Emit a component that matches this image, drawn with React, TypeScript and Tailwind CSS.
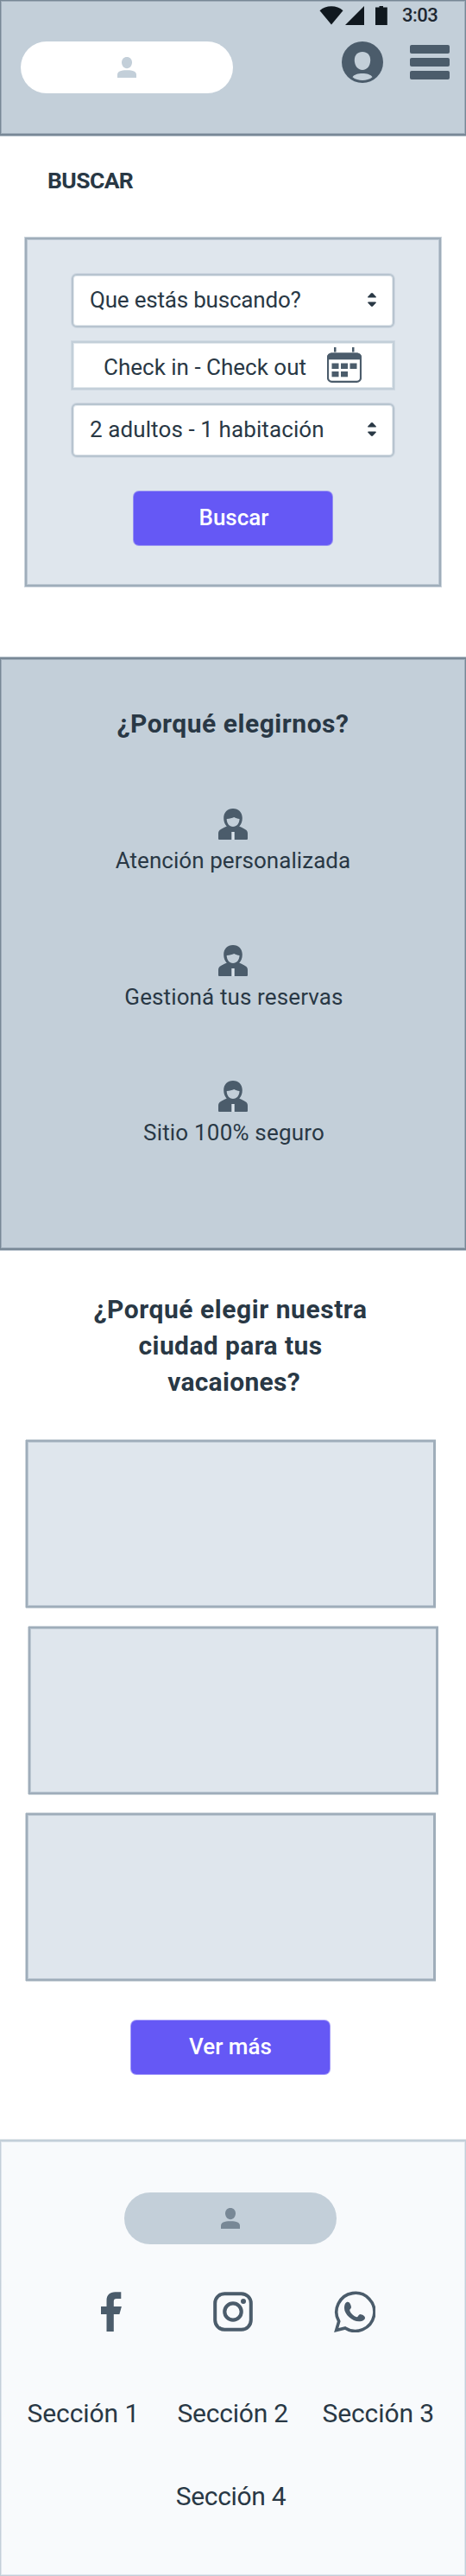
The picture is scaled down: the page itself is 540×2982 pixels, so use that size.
import type { ReactNode } from "react";

function PersonGlyph({ className }: { className: string }) {
  return (
    <svg viewBox="0 0 22 24" className={`h-6 w-[22px] ${className}`} fill="currentColor">
      <path d="M11 0c3.600 0 6 2.700 6 6.300S14.600 13.200 11 13.200 5 9.900 5 6.300 7.400 0 11 0z" />
      <path d="M0 24v-3.200C0 16.800 3.600 15.300 11 15.300s11 1.500 11 5.500V24z" />
    </svg>
  );
}

function StatusIcons() {
  return (
    <svg viewBox="0 0 80 22" className="mt-1.5 h-[22px] w-20" fill="#10181f">
      <path d="M.5 5.300C7.500-1.400 20.500-1.400 27.500 5.300L14 21.500z" />
      <path d="M52 0v22H30z" />
      <path d="M69.500 0H74v1.500h4.800V22H65V1.500h4.500z" />
    </svg>
  );
}

function AccountIcon() {
  return (
    <svg viewBox="0 0 48 48" className="ml-[126px] size-12">
      <circle cx="24" cy="24" r="24" fill="#4b5c6b" />
      <path d="M24 12c5.500 0 9.200 3.800 9.200 9.500 0 6.500-3.700 11.500-9.200 11.500s-9.200-5-9.200-11.500C14.800 15.800 18.500 12 24 12z" fill="#c3cfd9" />
      <path d="M12.500 41.200C15.500 35.600 32.500 35.600 35.500 41.200 29.500 46.200 18.500 46.200 12.500 41.200z" fill="#c3cfd9" />
    </svg>
  );
}

function SortArrows() {
  return (
    <svg viewBox="0 0 10 16" className="h-4 w-2.5" fill="#293845">
      <path d="M5 0c.4 0 .7.2 1 .5l3.600 3.800c.5.600.3 1.200-.6 1.200H1c-.9 0-1.100-.6-.6-1.200L4 .5c.3-.3.600-.5 1-.5z" />
      <path d="M5 16c.4 0 .7-.2 1-.5l3.600-3.800c.5-.6.3-1.200-.6-1.200H1c-.9 0-1.100.6-.6 1.200L4 15.500c.3.3.600.5 1 .5z" />
    </svg>
  );
}

function CalendarIcon() {
  return (
    <svg viewBox="0 0 40 41" className="mb-px h-[41px] w-10" fill="#4b5c6b">
      <rect x="8" width="2.500" height="5.500" />
      <rect x="29" width="2.500" height="5.500" />
      <rect x="1" y="7.500" width="38" height="32.300" rx="4.500" fill="none" stroke="#4b5c6b" strokeWidth="2.200" />
      <path d="M0 14.300V12c0-3.300 2-5.600 5.500-5.600h29C38 6.400 40 8.700 40 12v2.300z" />
      <rect x="5.500" y="18.500" width="8" height="6.500" />
      <rect x="16" y="18.500" width="8" height="6.500" />
      <rect x="26.500" y="18.500" width="8" height="6.500" />
      <rect x="5.500" y="28" width="8" height="6.300" />
      <rect x="16" y="28" width="8" height="6.300" />
    </svg>
  );
}

function AgentIcon() {
  return (
    <svg viewBox="0 0 34 36" className="h-9 w-[34px]" fill="#4b5c6b">
      <path
        fillRule="evenodd"
        d="M17 0C10.500 0 6.200 4.500 6.200 11c0 4 1.300 7.500 3.600 9.700C7.500 21.500 3 23.600 1.500 25 .3 26.200 0 27.600 0 29.200V34.500C0 35.500.5 36 1.400 36H15.200V27H18.800V36H32.600c.9 0 1.400-.5 1.400-1.500V29.200c0-1.600-.3-3-1.500-4.200-1.500-1.400-6-3.500-8.300-4.300 2.300-2.200 3.600-5.700 3.600-9.700C27.800 4.500 23.500 0 17 0zM9.700 12C13.500 12 15.500 10.900 18.300 10.100 20.300 11 22 11.800 24.500 12 24.500 17 21.300 21 17 21S9.700 17 9.700 12z"
      />
      <rect x="16.300" y="27" width="1.800" height="9" fill="#dfe6ed" />
    </svg>
  );
}

function FacebookIcon() {
  return (
    <svg viewBox="0 0 24 46" className="h-[46px] w-6" fill="#4b5c6b">
      <path d="M6.500 46V26H0V17H6.500V10C6.500 3.800 10.300.3 16.500.3H23.300V8H18C15.700 8 14.800 9 14.800 11V17H23.900L21.400 26H14.800V46z" />
    </svg>
  );
}

function InstagramIcon() {
  return (
    <svg viewBox="0 0 46 46" className="size-[46px]" fill="none" stroke="#4b5c6b" strokeWidth="4">
      <rect x="2.200" y="2.200" width="41.600" height="41.600" rx="11" />
      <circle cx="23" cy="23" r="9.700" strokeWidth="4.200" />
      <circle cx="35" cy="11" r="3" fill="#4b5c6b" stroke="none" />
    </svg>
  );
}

function WhatsappIcon() {
  return (
    <svg viewBox="0 0 48 48" className="size-12">
      <path d="M5.700 35.200L2.700 45.500 13 42.900A22 22 0 1 0 5.700 35.200z" fill="none" stroke="#4b5c6b" strokeWidth="3.600" />
      <path
        d="M12 20C12 15.300 13.700 12.800 16 12.800 18.200 12.800 20 16.500 20 19 20 20.700 17.700 21.300 18.300 22.900 19.800 26.300 23 29.300 26.300 30.200 28 30.600 28.500 27 30.500 27 32.700 27.300 36 29 36 30.900 36 33.300 33 35.300 29 35.300 21 35.300 12 27 12 20z"
        fill="#4b5c6b"
      />
    </svg>
  );
}

function SelectBox({ children }: { children: ReactNode }) {
  return (
    <div className="flex h-[62px] w-[374px] items-center justify-between rounded-md border-2 border-[#b7c4cf] bg-white pr-[19px] pb-0.5 pl-[19px] shadow-[0_0_0_1px_#cfd8e2,inset_0_0_0_1px_#e4e9ee]">
      {children}
      <SortArrows />
    </div>
  );
}

function PrimaryButton({ children }: { children: ReactNode }) {
  return (
    <button className="flex h-[62px] w-[230px] items-center justify-center rounded-md bg-[#6558f5] pb-0.5 text-[26px] leading-8 font-medium whitespace-nowrap text-white shadow-[0_0_0_1px_rgba(101,88,245,0.6)]">
      {children}
    </button>
  );
}

function Feature({ children }: { children: ReactNode }) {
  return (
    <li className="flex flex-col items-center gap-2 text-[26px] leading-8 whitespace-nowrap">
      <AgentIcon />
      {children}
    </li>
  );
}

const cardClass =
  "h-[194px] w-[475px] border-2 border-r-3 border-[#9fadba] bg-[#dfe6ed] shadow-[-1px_0_0_#cfd7dd,0_-1px_0_#cfd7dd,0_1px_0_#cfd7dd,inset_1px_0_0_#bcc8d3,inset_0_1px_0_#bcc8d3,inset_0_-1px_0_#bcc8d3]";

export default function App() {
  return (
    <div className="w-[540px] overflow-hidden bg-white font-[Roboto,sans-serif] text-[#293845]">
      <header className="h-[157px] border border-b-2 border-[#788896] bg-[#c3cfd9] shadow-[inset_0_0_0_1px_#9fadba,0_1px_0_#bbc5cf]">
        <div className="flex h-[47px] pl-[369px]">
          <StatusIcons />
          <span className="mt-1 ml-4 text-[22px] leading-[26px] font-medium tracking-[-0.5px] text-[#1d2731]">3:03</span>
        </div>
        <div className="flex items-start pl-[23px]">
          <div className="flex h-[60px] w-[246px] items-center justify-center rounded-full bg-white">
            <PersonGlyph className="text-[#c3cfd9]" />
          </div>
          <AccountIcon />
          <div className="mt-1 ml-[31px] flex flex-col gap-[5px]">
            <span className="h-2.5 w-[46px] rounded-[2px] bg-[#4b5c6b]" />
            <span className="h-2.5 w-[46px] rounded-[2px] bg-[#4b5c6b]" />
            <span className="h-2.5 w-[46px] rounded-[2px] bg-[#4b5c6b]" />
          </div>
        </div>
      </header>

      <main>
        <h1 className="mt-9 ml-[55px] text-[26.5px] leading-8 font-bold tracking-[-0.6px]">BUSCAR</h1>

        <section className="mt-[50px] ml-[29px] flex h-[404px] w-[482px] flex-col items-center border-2 border-[#9fadba] bg-[#dfe6ed] pt-10 text-[26px] leading-8 whitespace-nowrap shadow-[0_0_0_1px_#cbd4dc,inset_0_0_0_1px_#bcc8d3]">
          <SelectBox>
            <span className="tracking-[-0.2px]">Que estás buscando?</span>
          </SelectBox>
          <div className="mt-4 flex h-14 w-[374px] items-center justify-between border-2 border-[#c3cfd9] bg-white pr-9 pl-[35px] shadow-[0_0_0_1px_#cfd9e2,inset_0_0_0_1px_#e2e8ed]">
            <span className="pt-[3px]">Check in - Check out</span>
            <CalendarIcon />
          </div>
          <div className="mt-4">
            <SelectBox>
              <span className="tracking-[0.1px]">2 adultos - 1 habitación</span>
            </SelectBox>
          </div>
          <div className="mt-10">
            <PrimaryButton>
              <span className="pl-0.5">Buscar</span>
            </PrimaryButton>
          </div>
        </section>

        <section className="mt-[82px] h-[686px] border-x border-y-2 border-[#788896] bg-[#c3cfd9] pt-[54px] shadow-[inset_0_0_0_1px_#9fadba,0_1px_0_#bbc5cf,0_-1px_0_#bbc5cf]">
          <h2 className="text-center text-[30px] leading-[42px] font-bold tracking-[0.52px]">¿Porqué elegirnos?</h2>
          <ul className="mt-[77px] flex flex-col gap-[81.5px]">
            <Feature>
              <span className="tracking-[0.05px]">Atención personalizada</span>
            </Feature>
            <Feature>
              <span className="pl-0.5 tracking-[0.12px]">Gestioná tus reservas</span>
            </Feature>
            <Feature>
              <span className="pl-0.5 tracking-[0.19px]">Sitio 100% seguro</span>
            </Feature>
          </ul>
        </section>

        <section className="pt-12">
          <h2 className="w-[534px] text-center text-[30px] leading-[42px] font-bold">
            <span className="block tracking-[0.55px]">¿Porqué elegir nuestra</span>
            <span className="block tracking-[0.4px]">ciudad para tus</span>
            <span className="block pl-2 tracking-[0.28px]">vacaiones?</span>
          </h2>
          <div className="mt-[46px] ml-[30px] flex flex-col gap-[22px]">
            <div className={cardClass} />
            <div className={`ml-[3px] ${cardClass}`} />
            <div className={cardClass} />
          </div>
          <div className="mt-[46px] ml-[152px]">
            <PrimaryButton>Ver más</PrimaryButton>
          </div>
        </section>
      </main>

      <footer className="mt-[76px] h-[505px] border border-t-2 border-[#c3cfd9] bg-[#f8fafc] pt-[59px] shadow-[inset_0_0_0_1px_#dfe6ed,0_-1px_0_#e0e6ea]">
        <div className="ml-[143px] flex h-[60px] w-[246px] items-center justify-center rounded-full bg-[#c3cfd9]">
          <PersonGlyph className="text-[#788896]" />
        </div>
        <div className="mt-[54px] flex h-12 items-center justify-between pr-[104px] pl-[116px]">
          <FacebookIcon />
          <span className="-mr-3">
            <InstagramIcon />
          </span>
          <WhatsappIcon />
        </div>
        <nav className="mt-[73px] text-[30px] leading-[42px] whitespace-nowrap">
          <div className="flex pl-[30.5px]">
            <a className="w-[174px] tracking-[-0.07px]">Sección 1</a>
            <a className="w-[168px] tracking-[-0.23px]">Sección 2</a>
            <a className="tracking-[-0.1px]">Sección 3</a>
          </div>
          <div className="mt-[54px] w-[533px] text-center">
            <a className="tracking-[-0.3px]">Sección 4</a>
          </div>
        </nav>
      </footer>
    </div>
  );
}
